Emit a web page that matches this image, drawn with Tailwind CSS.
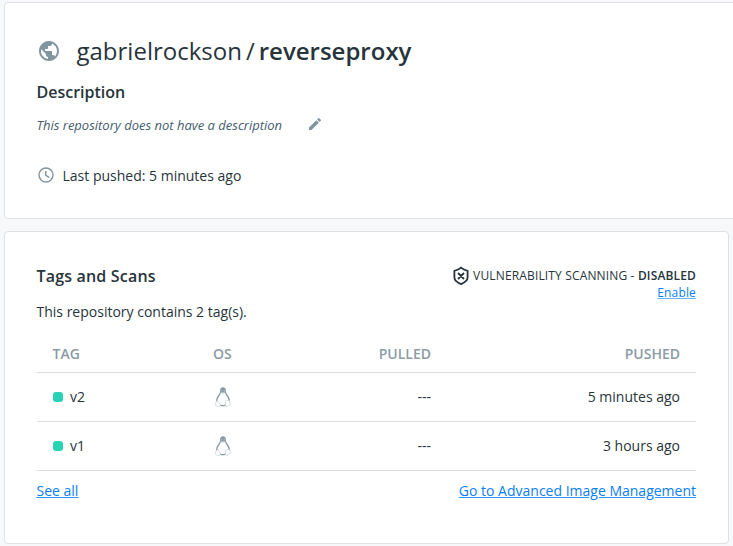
<!DOCTYPE html>
<html lang="en">
<head>
<meta charset="utf-8">
<title>gabrielrockson/reverseproxy</title>
<script src="https://cdn.jsdelivr.net/npm/@tailwindcss/browser@4"></script>
</head>
<body class="h-[546px] overflow-hidden bg-[#f7f8fa] pt-[2px] pl-1 font-['Open_Sans',sans-serif] text-sm leading-5 text-[#27343b]">
<svg class="hidden">
  <symbol id="tux" viewBox="0 0 16 20">
    <path d="M5.100 4.200C4.900 1.600 6.100.3 8 .3s3.100 1.300 2.900 3.900c0 2.700 4 5.300 4 9.500 0 3-3.100 5.500-6.900 5.500s-6.900-2.500-6.900-5.500c0-4.200 4-6.800 4-9.500Z" fill="#8799a3"/>
    <path d="M5.900 5.600 8 6.500l2.100-.9c.3 2.700 3.300 4.800 3.300 8.100 0 2.500-2.500 4.300-5.400 4.300s-5.400-1.800-5.400-4.300C2.600 10.400 5.600 8.300 5.900 5.600Z" fill="#fff"/>
    <path d="M6.300 3.300h1M8.800 3.300h1M6.300 4.800 8 5.700l1.700-.9" fill="none" stroke="#c5d0d5" stroke-width=".8"/>
    <path d="m2.400 13.300 2.900 4.100c.5 1.700-.8 2.400-2.200 1.900L.5 18.600c-.6-.3.100-1.600-.1-2.500-.1-.9 1-.7 1.200-1.300.2-.7.200-1.400.8-1.500Zm11.200 0-2.800.6-.4 4.400c.2 1.400 1.600 1.500 2.500.7l2.500-1.700c.8-.6-.2-.9-.4-1.700-.3-1 .1-2-1.400-2.300Z" fill="#fff" stroke="#bdc8ce" stroke-width=".6"/>
  </symbol>
</svg>
<section class="h-[217px] w-[760px] rounded-sm border border-[#dfe1e5] bg-white pt-8 pl-[31.500px]">
  <h1 class="flex h-8 items-center text-[24px] leading-8 whitespace-nowrap">
    <svg class="mr-4 ml-[.5px] size-6 shrink-0" viewBox="0 0 24 24" fill="#8195a1"><path d="M12 2C6.480 2 2 6.480 2 12s4.480 10 10 10 10-4.480 10-10S17.520 2 12 2zm-1 17.930c-3.950-.49-7-3.850-7-7.930 0-.62.080-1.210.210-1.790L9 15v1c0 1.100.9 2 2 2v1.930zm6.900-2.540c-.26-.81-1-1.390-1.900-1.390h-1v-3c0-.55-.45-1-1-1H8v-2h2c.55 0 1-.45 1-1V7h2c1.100 0 2-.9 2-2v-.41c2.930 1.190 5 4.060 5 7.410 0 2.080-.8 3.970-2.100 5.390z"/></svg>
    <span class="-ml-[.5px]">gabrielrockson</span><span class="mx-1">/</span><span class="font-semibold">reverseproxy</span>
  </h1>
  <h2 class="mt-[13px] h-6 text-base leading-6 font-semibold">Description</h2>
  <div class="mt-[11px] flex h-5 items-center">
    <p class="text-[13px] text-[#445d6e] italic">This repository does not have a description</p>
    <svg class="ml-[24.500px] size-4 -translate-y-px" viewBox="0 0 24 24" fill="#8195a1"><path d="M3 17.250V21h3.750L17.810 9.940l-3.750-3.750L3 17.250zM20.710 7.040a1 1 0 0 0 0-1.410l-2.340-2.340a1 1 0 0 0-1.410 0l-1.830 1.830 3.750 3.750 1.830-1.830z"/></svg>
  </div>
  <div class="mt-[31px] flex h-5 items-center">
    <svg class="mr-[7.500px] ml-[.5px] size-[18px] -translate-y-px" viewBox="0 0 24 24" fill="none" stroke="#8195a1" stroke-width="1.900"><circle cx="12" cy="12" r="9.300"/><path d="M11.700 6.500v6l4.600 2.800"/></svg>
    <p>Last pushed: 5 minutes ago</p>
  </div>
</section>
<section class="mt-3 h-[313px] w-[725px] rounded-sm border border-[#dfe1e5] bg-white px-8 pt-8">
  <header class="flex h-[38px] justify-between">
    <h2 class="-ml-[.5px] text-base leading-6 font-semibold tracking-[.18px]">Tags and Scans</h2>
    <div class="flex flex-col items-end text-xs leading-[17px]">
      <div class="flex h-5 items-center pt-[3px]">
        <svg class="mr-1 h-5 w-4" viewBox="0 0 16 20" fill="none" stroke="#27343b" stroke-width="1.800"><path d="M8 1.700Q5.500 4 1.400 4.900v6.600c0 3.300 3 5 6.600 6.600 3.600-1.600 6.600-3.300 6.600-6.600V4.900Q10.500 4 8 1.700ZM5 7l6 6M11 7l-6 6"/></svg>
        <p class="tracking-[.15px]">VULNERABILITY SCANNING - <span class="font-semibold">DISABLED</span></p>
      </div>
      <a class="tracking-[.15px] text-[#0880f8] underline decoration-[#0880f8]/60">Enable</a>
    </div>
  </header>
  <p class="-ml-[.5px]">This repository contains 2 tag(s).</p>
  <table class="mt-px w-full table-fixed border-collapse">
    <colgroup><col class="w-[160px]"><col class="w-[130px]"><col class="w-[120px]"><col></colgroup>
    <thead class="text-[#8b9ba5]">
      <tr class="h-[49px] border-b border-[#dcdee0]"><th class="pt-3.5 pl-[15.500px] text-left font-semibold">TAG</th><th class="pt-3.5 pl-4 text-left font-semibold">OS</th><th class="pt-3.5 pr-4 text-right font-semibold">PULLED</th><th class="pt-3.5 pr-4 text-right font-semibold">PUSHED</th></tr>
    </thead>
    <tbody>
      <tr class="h-[49px] border-b border-[#dcdee0]"><td class="pl-4"><div class="flex items-center gap-[7px]"><i class="size-2.5 rounded-[3px] bg-[#27d3b2]"></i>v2</div></td><td class="pl-[18px]"><svg class="h-5 w-4"><use href="#tux"/></svg></td><td class="pr-4 text-right">---</td><td class="pr-4 text-right">5 minutes ago</td></tr>
      <tr class="h-[49px] border-b border-[#dcdee0]"><td class="pl-4"><div class="flex items-center gap-[7px]"><i class="size-2.5 rounded-[3px] bg-[#27d3b2]"></i>v1</div></td><td class="pl-[18px]"><svg class="h-5 w-4"><use href="#tux"/></svg></td><td class="pr-4 text-right">---</td><td class="pr-4 text-right">3 hours ago</td></tr>
    </tbody>
  </table>
  <footer class="mt-2.5 -ml-[.5px] flex justify-between text-[#0880f8] underline decoration-[#0880f8]/60"><a>See all</a><a>Go to Advanced Image Management</a></footer>
</section>
</body>
</html>
